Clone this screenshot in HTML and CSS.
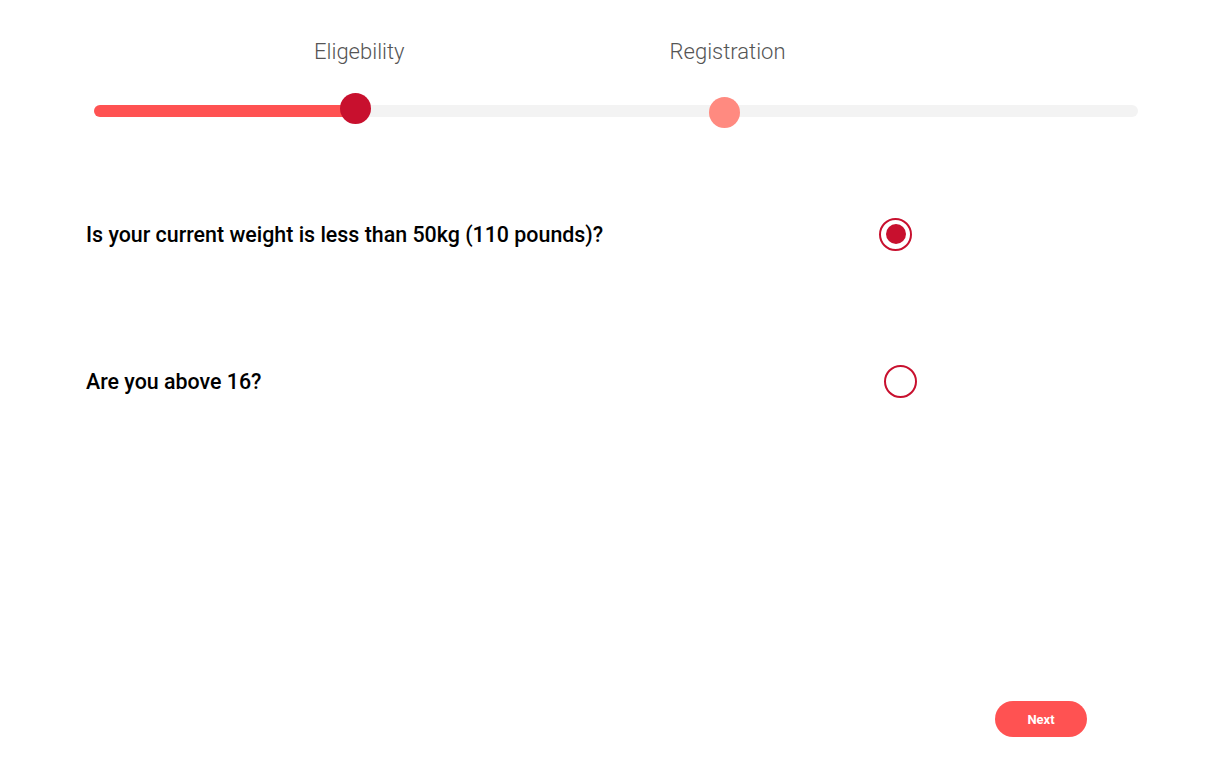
FILE: index.html
```html
<!DOCTYPE html>
<html lang="en">
<head>
<meta charset="utf-8">
<title>Eligibility</title>
<link rel="stylesheet" href="styles.css">
</head>
<body>
<main class="page">
  <section class="progress">
    <div class="steps">
      <span class="step step-first">Eligebility</span>
      <span class="step step-second">Registration</span>
    </div>
    <div class="track">
      <div class="fill" style="width: 261px"></div>
      <span class="knob knob-active"></span>
      <span class="knob knob-next"></span>
    </div>
  </section>

  <section class="questions">
    <div class="question">
      <p class="question-text">Is your current weight is less than 50kg (110 pounds)?</p>
      <span class="radio radio-checked"><span class="radio-dot"></span></span>
    </div>
    <div class="question question-second">
      <p class="question-text">Are you above 16?</p>
      <span class="radio radio-offset"></span>
    </div>
  </section>

  <footer class="actions">
    <button class="next-btn" type="button">Next</button>
  </footer>
</main>
</body>
</html>
```

FILE: styles.css
```css
* { box-sizing: border-box; }
html, body { margin: 0; padding: 0; background: #ffffff; }
body {
  font-family: Roboto, "Liberation Sans", Arial, sans-serif;
  color: #000;
  width: 1220px;
  height: 764px;
  overflow: hidden;
}
.page { padding-top: 40px; }

.progress { padding: 0 82px 0 94px; }
.steps {
  display: flex;
  padding-left: 220px;
  height: 24px;
  align-items: center;
}
.step {
  font-size: 22px;
  font-weight: 300;
  color: #555555;
  line-height: 24px;
}
.step-second { margin-left: 265px; }

.track {
  position: relative;
  margin-top: 41px;
  height: 12px;
  border-radius: 6px;
  background: #f3f3f3;
}
.fill {
  height: 12px;
  border-radius: 6px;
  background: #ff5252;
}
.knob {
  position: absolute;
  border-radius: 50%;
}
.knob-active {
  left: 246px;
  top: -12px;
  width: 31px;
  height: 31px;
  background: #c8102e;
}
.knob-next {
  left: 615px;
  top: -8px;
  width: 31px;
  height: 31px;
  background: #ff8a80;
}

.questions {
  margin-top: 100px;
  padding-left: 86px;
}
.question {
  display: flex;
  align-items: center;
  height: 34px;
}
.question-second { margin-top: 113px; }
.question-text {
  margin: 0;
  width: 793px;
  padding-top: 2px;
  font-size: 21.4px;
  font-weight: 500;
  line-height: 24px;
  color: #000;
}
.radio {
  width: 33px;
  height: 33px;
  border: 2px solid #c8102e;
  border-radius: 50%;
  display: flex;
  align-items: center;
  justify-content: center;
}
.radio-dot {
  width: 20px;
  height: 20px;
  border-radius: 50%;
  background: #c8102e;
}
.radio-offset { margin-left: 5px; }

.actions {
  display: flex;
  justify-content: flex-end;
  padding-right: 133px;
  margin-top: 303px;
}
.next-btn {
  width: 92px;
  height: 36px;
  border: none;
  border-radius: 18px;
  background: #ff5252;
  color: #ffffff;
  font-family: Roboto, "Liberation Sans", Arial, sans-serif;
  font-size: 13px;
  font-weight: 700;
  padding: 0;
  cursor: pointer;
}
```
